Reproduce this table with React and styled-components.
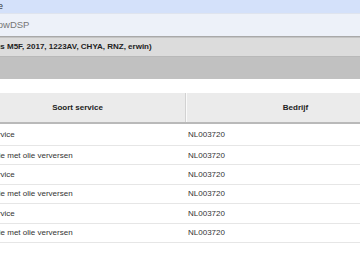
import React from "react";
import styled, { createGlobalStyle } from "styled-components";

const Global = createGlobalStyle`
  html, body { margin: 0; padding: 0; background: #fff; overflow: hidden; }
  body { font-family: "Liberation Sans", Arial, sans-serif; }
`;

const Page = styled.div`
  width: 440px;
  margin-left: -30px;
  display: flex;
  flex-direction: column;
`;

const TopBar = styled.div`
  height: 13px;
  background: #d4e1fa;
  font-size: 9px;
  line-height: 12px;
  color: #333;
  padding-left: 3px;
`;

const TitleBar = styled.div`
  height: 22px;
  background: #edf1f9;
  border-top: 1px solid #dfe4ee;
  border-bottom: 1px solid #a9a9a9;
  font-size: 9.5px;
  line-height: 22px;
  color: #767676;
  padding-left: 1px;
`;

const InfoBar = styled.div`
  height: 18px;
  background: #dcdcdc;
  border-top: 1px solid #c4c4c4;
  border-bottom: 1px solid #b9b9b9;
  font-size: 8px;
  font-weight: bold;
  line-height: 18px;
  color: #222;
  padding-left: 9px;
`;

const ToolBar = styled.div`
  height: 22px;
  background: #c1c1c1;
`;

const Table = styled.div`
  margin-top: 14px;
  display: flex;
  flex-direction: column;
`;

const HeadRow = styled.div`
  display: grid;
  grid-template-columns: 215px 220px;
  height: 29px;
  background: #ebebeb;
  border-bottom: 2px solid #b9b9b9;
`;

const HeadCell = styled.div`
  display: flex;
  align-items: center;
  justify-content: center;
  font-size: 8px;
  font-weight: bold;
  color: #222;
  border-left: ${(p) => (p.$divider ? "1px solid #d2d2d2" : "none")};
  box-shadow: ${(p) => (p.$divider ? "inset 1px 0 0 #fafafa" : "none")};
`;

const Row = styled.div`
  display: grid;
  grid-template-columns: 215px 220px;
  height: 19.4px;
  box-sizing: border-box;
  border-bottom: 1px solid #e6e6e6;
  &:first-child { height: 22px; }
`;

const Cell = styled.div`
  display: flex;
  align-items: center;
  padding-left: 3px;
  font-size: 8px;
  color: #333;
  white-space: nowrap;
`;

const rows = [
  ["Autoservice", "NL003720"],
  ["Inspectie met olie verversen", "NL003720"],
  ["Autoservice", "NL003720"],
  ["Inspectie met olie verversen", "NL003720"],
  ["Autoservice", "NL003720"],
  ["Inspectie met olie verversen", "NL003720"],
];

export default function App() {
  return (
    <>
      <Global />
      <Page>
        <TopBar>Service</TopBar>
        <TitleBar>WorkflowDSP</TitleBar>
        <InfoBar>(Lexus M5F, 2017, 1223AV, CHYA, RNZ, erwin)</InfoBar>
        <ToolBar />
        <Table>
          <HeadRow>
            <HeadCell>Soort service</HeadCell>
            <HeadCell $divider>Bedrijf</HeadCell>
          </HeadRow>
          <div>
            {rows.map(([service, company], i) => (
              <Row key={i}>
                <Cell>{service}</Cell>
                <Cell>{company}</Cell>
              </Row>
            ))}
          </div>
        </Table>
      </Page>
    </>
  );
}
